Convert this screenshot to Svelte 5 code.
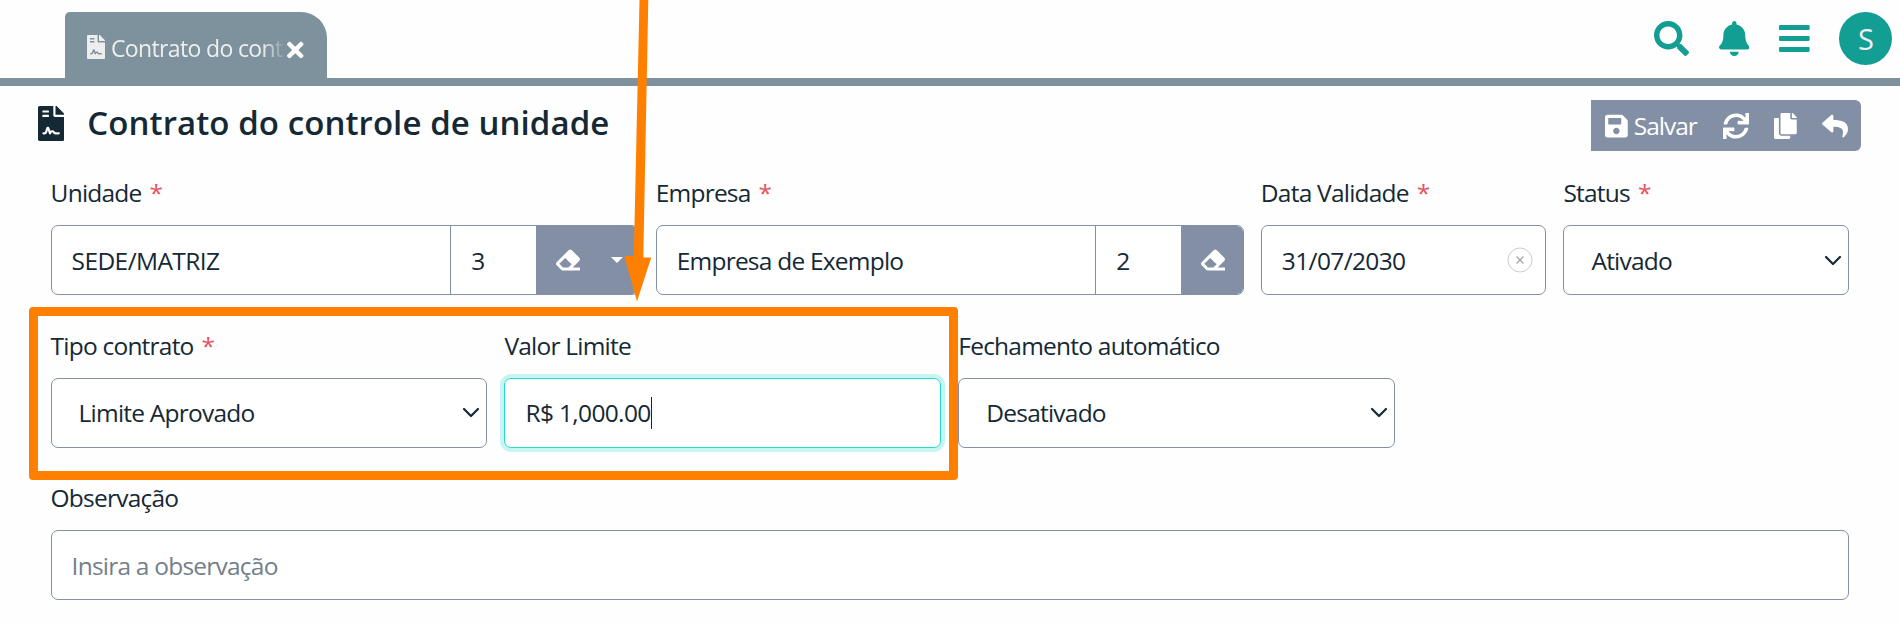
<script>
  const icons = {
    contract: [384, 'M224 136V0H24C10.7 0 0 10.7 0 24v464c0 13.3 10.7 24 24 24h336c13.3 0 24-10.7 24-24V160H248c-13.2 0-24-10.8-24-24zM64 72c0-4.42 3.58-8 8-8h80c4.42 0 8 3.58 8 8v16c0 4.42-3.58 8-8 8H72c-4.42 0-8-3.58-8-8V72zm0 64c0-4.42 3.58-8 8-8h80c4.42 0 8 3.58 8 8v16c0 4.42-3.58 8-8 8H72c-4.42 0-8-3.58-8-8v-16zm192.81 248H304c8.84 0 16 7.16 16 16s-7.16 16-16 16h-47.19c-16.45 0-31.27-9.14-38.64-23.86-2.95-5.92-8.09-6.52-10.17-6.52s-7.22.59-10.02 6.19l-7.67 15.34a15.986 15.986 0 0 1-14.31 8.84c-.38 0-.75-.02-1.14-.05-6.45-.45-12-4.75-14.03-10.89L144 354.59l-10.61 31.88c-5.89 17.66-22.38 29.53-41 29.53H80c-8.84 0-16-7.16-16-16s7.16-16 16-16h12.39c4.83 0 9.11-3.08 10.64-7.66l18.19-54.64c3.3-9.81 12.44-16.41 22.78-16.41s19.48 6.59 22.77 16.41l13.88 41.64c19.77-16.19 54.05-9.7 66 14.16 2.02 4.06 5.96 6.5 10.16 6.5zM377 105L279.1 7c-4.5-4.5-10.6-7-17-7H256v128h128v-6.1c0-6.3-2.5-12.4-7-16.9z'],
    times: [352, 'M242.72 256l100.07-100.07c12.28-12.28 12.28-32.19 0-44.48l-22.24-22.24c-12.28-12.28-32.19-12.28-44.48 0L176 189.28 75.93 89.21c-12.28-12.28-32.19-12.28-44.48 0L9.21 111.45c-12.28 12.28-12.28 32.19 0 44.48L109.28 256 9.21 356.07c-12.28 12.28-12.28 32.19 0 44.48l22.24 22.24c12.28 12.28 32.2 12.28 44.48 0L176 322.72l100.07 100.07c12.28 12.28 32.2 12.28 44.48 0l22.24-22.24c12.28-12.28 12.28-32.19 0-44.48L242.72 256z'],
    search: [512, 'M505 442.7L405.3 343c-4.5-4.5-10.6-7-17-7H372c27.6-35.3 44-79.7 44-128C416 93.1 322.9 0 208 0S0 93.1 0 208s93.1 208 208 208c48.3 0 92.7-16.4 128-44v16.3c0 6.4 2.5 12.5 7 17l99.7 99.7c9.4 9.4 24.6 9.4 33.9 0l28.3-28.3c9.4-9.4 9.4-24.6.1-34zM208 336c-70.7 0-128-57.2-128-128 0-70.7 57.2-128 128-128 70.7 0 128 57.2 128 128 0 70.7-57.2 128-128 128z'],
    bell: [448, 'M224 512c35.32 0 63.97-28.65 63.97-64H160.03c0 35.35 28.65 64 63.97 64zm215.39-149.71c-19.32-20.76-55.47-51.99-55.47-154.29 0-77.7-54.48-139.9-127.94-155.16V32c0-17.67-14.32-32-31.98-32s-31.98 14.33-31.98 32v20.84C118.56 68.1 64.08 130.3 64.08 208c0 102.3-36.15 133.53-55.47 154.29-6 6.45-8.66 14.16-8.61 21.71.11 16.4 12.98 32 32.1 32h383.8c19.12 0 32-15.6 32.1-32 .05-7.55-2.61-15.27-8.61-21.71z'],
    bars: [448, 'M16 132h416c8.837 0 16-7.163 16-16V76c0-8.837-7.163-16-16-16H16C7.163 60 0 67.163 0 76v40c0 8.837 7.163 16 16 16zm0 160h416c8.837 0 16-7.163 16-16v-40c0-8.837-7.163-16-16-16H16c-8.837 0-16 7.163-16 16v40c0 8.837 7.163 16 16 16zm0 160h416c8.837 0 16-7.163 16-16v-40c0-8.837-7.163-16-16-16H16c-8.837 0-16 7.163-16 16v40c0 8.837 7.163 16 16 16z'],
    save: [448, 'M433.941 129.941l-83.882-83.882A48 48 0 0 0 316.118 32H48C21.49 32 0 53.49 0 80v352c0 26.51 21.49 48 48 48h352c26.51 0 48-21.49 48-48V163.882a48 48 0 0 0-14.059-33.941zM224 416c-35.346 0-64-28.654-64-64 0-35.346 28.654-64 64-64s64 28.654 64 64c0 35.346-28.654 64-64 64zm96-304.52V212c0 6.627-5.373 12-12 12H76c-6.627 0-12-5.373-12-12V108c0-6.627 5.373-12 12-12h228.52c3.183 0 6.235 1.264 8.485 3.515l3.48 3.48A11.996 11.996 0 0 1 320 111.48z'],
    refresh: [512, 'M440.65 12.57l4 82.77A247.16 247.16 0 0 0 255.83 8C134.73 8 33.91 94.92 12.29 209.82A12 12 0 0 0 24.09 224h49.05a12 12 0 0 0 11.67-9.26 175.91 175.91 0 0 1 317-56.94l-101.46-4.86a12 12 0 0 0-12.57 12v47.41a12 12 0 0 0 12 12H500a12 12 0 0 0 12-12V12a12 12 0 0 0-12-12h-47.37a12 12 0 0 0-11.98 12.57zM255.83 432a175.61 175.61 0 0 1-146-77.8l101.8 4.87a12 12 0 0 0 12.57-12v-47.4a12 12 0 0 0-12-12H12a12 12 0 0 0-12 12V500a12 12 0 0 0 12 12h47.35a12 12 0 0 0 12-12.6l-4.15-82.57A247.17 247.17 0 0 0 255.83 504c121.11 0 221.93-86.92 243.55-201.82a12 12 0 0 0-11.8-14.18h-49.05a12 12 0 0 0-11.67 9.26A175.86 175.86 0 0 1 255.83 432z'],
    copy: [448, 'M320 448v40c0 13.255-10.745 24-24 24H24c-13.255 0-24-10.745-24-24V120c0-13.255 10.745-24 24-24h72v296c0 30.879 25.121 56 56 56h168zm0-344V0H152c-13.255 0-24 10.745-24 24v368c0 13.255 10.745 24 24 24h272c13.255 0 24-10.745 24-24V128H344c-13.2 0-24-10.8-24-24zm120.971-31.029L375.029 7.029A24 24 0 0 0 358.059 0H352v96h96v-6.059a24 24 0 0 0-7.029-16.97z'],
    reply: [512, 'M8.309 189.836L184.313 37.851C199.719 24.546 224 35.347 224 56.015v80.053c160.629 1.839 288 34.032 288 186.258 0 61.441-39.581 122.309-83.333 154.132-13.653 9.931-33.111-2.533-28.077-18.631 45.344-145.012-21.507-183.51-176.59-185.742V360c0 20.7-24.3 31.453-39.687 18.164l-176.004-152c-11.071-9.562-11.086-26.753 0-36.328z'],
    eraser: [512, 'M497.941 273.941c18.745-18.745 18.745-49.137 0-67.882l-160-160c-18.745-18.745-49.136-18.746-67.883 0l-256 256c-18.745 18.745-18.745 49.137 0 67.882l96 96A48.004 48.004 0 0 0 144 480h356c6.627 0 12-5.373 12-12v-40c0-6.627-5.373-12-12-12H355.883l142.058-142.059zm-302.627-62.627l137.373 137.373L265.373 416H150.628l-80-80 124.686-124.686z']
  };
</script>

{#snippet icon(name, size)}
  <svg class="icon" viewBox="0 0 {icons[name][0]} 512" height={size} width={(size * icons[name][0]) / 512} aria-hidden="true"><path d={icons[name][1]} /></svg>
{/snippet}

{#snippet label(text, required)}
  <div class="label">{text}{#if required}<span class="req">*</span>{/if}</div>
{/snippet}

{#snippet select(value)}
  <div class="control select">
    <span>{value}</span>
    <svg class="chevron" width="18" height="12" viewBox="0 0 18 12"><path d="M2 2l7 7 7-7" /></svg>
  </div>
{/snippet}

<div class="page">
  <header>
    <div class="tab">
      {@render icon('contract', 24)}
      <span class="tab-text">Contrato do cont</span>
      <span class="close">{@render icon('times', 24)}</span>
    </div>
    <nav>
      {@render icon('search', 35)}
      {@render icon('bell', 35)}
      {@render icon('bars', 35)}
      <div class="avatar">S</div>
    </nav>
  </header>

  <div class="heading">
    {@render icon('contract', 35)}
    <h1>Contrato do controle de unidade</h1>
    <div class="toolbar">
      {@render icon('save', 26)}
      <span class="save-text">Salvar</span>
      <span class="t-refresh">{@render icon('refresh', 26)}</span>
      <span class="t-copy">{@render icon('copy', 26)}</span>
      {@render icon('reply', 26)}
    </div>
  </div>

  <main>
    <div class="field w4">
      {@render label('Unidade', true)}
      <div class="control group">
        <span class="grow caps">SEDE/MATRIZ</span>
        <span class="code">3</span>
        <span class="addon wide">{@render icon('eraser', 24)}<i class="caret"></i></span>
      </div>
    </div>
    <div class="field w4">
      {@render label('Empresa', true)}
      <div class="control group">
        <span class="grow">Empresa de Exemplo</span>
        <span class="code">2</span>
        <span class="addon">{@render icon('eraser', 24)}</span>
      </div>
    </div>
    <div class="field w2">
      {@render label('Data Validade', true)}
      <div class="control date">
        <span class="digits">31/07/2030</span>
        <svg width="26" height="26" viewBox="0 0 26 26"><circle cx="13" cy="13" r="12" /><path d="M9.5 9.5l7 7M16.5 9.5l-7 7" /></svg>
      </div>
    </div>
    <div class="field w2">
      {@render label('Status', true)}
      {@render select('Ativado')}
    </div>

    <div class="field w3">
      {@render label('Tipo contrato', true)}
      {@render select('Limite Aprovado')}
    </div>
    <div class="field w3">
      {@render label('Valor Limite', false)}
      <div class="control focus"><span class="digits">R$ 1,000.00</span><i class="cursor"></i></div>
    </div>
    <div class="field w3">
      {@render label('Fechamento automático', false)}
      {@render select('Desativado')}
    </div>

    <div class="field w12">
      {@render label('Observação', false)}
      <div class="control placeholder"><span>Insira a observação</span></div>
    </div>
  </main>

  <div class="highlight"></div>
  <svg class="arrow" width="30" height="302" viewBox="623 0 30 302"><path d="M639.5 0H648.3L643.3 257.5H651.2L637 301.5L624.3 256H633.8Z" /></svg>
</div>

<style>
  :global(body) { margin: 0; background: #fefefe; }
  .page {
    position: relative;
    width: 1900px;
    height: 624px;
    overflow: hidden;
    box-sizing: border-box;
    font: 24.5px/36px "Open Sans", "Noto Sans", sans-serif;
    letter-spacing: -0.78px;
    color: #152935;
  }
  .page * { box-sizing: border-box; }
  .icon { fill: currentColor; flex: none; display: block; }

  header {
    height: 86px;
    padding: 12px 8px 0 65px;
    border-bottom: 8px solid #7e929d;
    display: flex;
    justify-content: space-between;
    align-items: flex-start;
  }
  .tab {
    width: 262px;
    height: 66px;
    padding: 4px 0 0 22px;
    background: #7e929d;
    border-radius: 5px 26px 0 0;
    display: flex;
    align-items: center;
    color: #eee;
  }
  .tab-text {
    width: 172px;
    margin: 1px 0 0 6px;
    font-size: 23px;
    letter-spacing: -0.65px;
    white-space: nowrap;
    -webkit-mask-image: linear-gradient(90deg, #000 88%, transparent 102%);
    mask-image: linear-gradient(90deg, #000 88%, transparent 102%);
  }
  .close { margin: 5px 0 0 4px; color: #fff; }
  nav { display: flex; align-items: center; color: #139e94; gap: 29.5px; height: 53px; }
  .avatar {
    width: 53px;
    height: 53px;
    border-radius: 50%;
    background: #139e94;
    color: #eee;
    font-size: 29px;
    line-height: 54px;
    text-align: center;
  }

  .heading { display: flex; align-items: center; height: 74px; padding: 0 39px 0 38px; }
  h1 { margin: 0 auto 0 23px; font-size: 33px; line-height: 44px; font-weight: 600; letter-spacing: 0.08px; }
  .toolbar {
    width: 270px;
    height: 51px;
    margin-top: 5px;
    padding: 0 13px 0 14px;
    display: flex;
    align-items: center;
    background: #838fa5;
    border-radius: 0 6px 6px 0;
    color: #fff;
  }
  .save-text { width: 64px; margin: 0 25px 0 6px; letter-spacing: -1px; }
  .t-refresh { margin-right: 25px; }
  .t-copy { margin-right: 25px; }

  main {
    padding: 15px 51px 0 50.6px;
    display: grid;
    grid-template-columns: repeat(12, 1fr);
    column-gap: 17px;
    row-gap: 32.7px;
  }
  .w2 { grid-column: span 2; }
  .w3 { grid-column: span 3; }
  .w4 { grid-column: span 4; }
  .w12 { grid-column: 1 / -1; }
  .label { height: 50px; line-height: 36px; white-space: nowrap; }
  .req { margin-left: 8px; color: #e8505f; }
  .control {
    height: 70px;
    padding: 0 20px;
    border: 1px solid #838fa5;
    border-radius: 7px;
    display: flex;
    align-items: center;
    background: #fff;
    white-space: nowrap;
  }
  .control > span { padding-top: 1px; }
  .group { padding: 0; overflow: hidden; align-items: stretch; line-height: 68px; }
  .control > .grow { flex: 1; padding-left: 20px; }
  .control > .caps { letter-spacing: -0.6px; }
  .control > .code { width: 85.5px; padding-left: 20px; border-left: 1px solid #838fa5; }
  .control > .addon {
    width: 62px;
    padding: 0 0 0 20px;
    display: flex;
    align-items: center;
    background: #838fa5;
    color: #fff;
  }
  .control > .addon.wide { width: 102px; }
  .control > .digits { letter-spacing: -0.65px; }
  .caret {
    margin-left: 31px;
    border: 6px solid transparent;
    border-top-color: #fff;
    border-bottom: 0;
  }
  .select { justify-content: space-between; padding: 0 6.5px 0 27px; }
  .chevron { fill: none; stroke: #152935; stroke-width: 2.2; stroke-linecap: round; stroke-linejoin: round; margin-top: 1px; }
  .date { justify-content: space-between; padding-right: 12px; }
  .date svg { fill: none; stroke: #ccc; stroke-width: 1; }
  .date path { stroke: #aaa; stroke-width: 1.4; }
  .focus { border-color: #2bd9ca; box-shadow: 0 0 0 4px #c5f6f1; }
  .cursor { width: 1px; height: 32px; background: #152935; }
  .placeholder { color: #73808a; }

  .highlight {
    position: absolute;
    left: 29px;
    top: 307px;
    width: 929px;
    height: 173px;
    border: 9px solid #ff8000;
    border-radius: 4px;
  }
  .arrow { position: absolute; left: 623px; top: 0; fill: #ff8000; }
</style>
